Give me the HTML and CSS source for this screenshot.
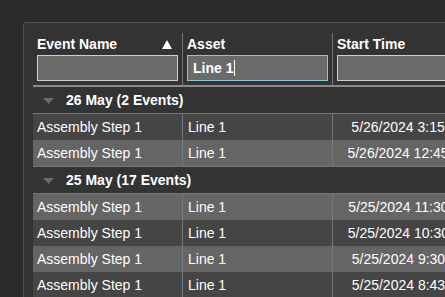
FILE: index.html
```html
<!DOCTYPE html>
<html lang="en">
<head>
    <meta charset="UTF-8">
    <title>Events Grid</title>
    <link rel="stylesheet" href="styles.css">
</head>
<body>
    <div class="panel">
        <div class="grid">
            <div class="head">
                <div class="hcell">
                    <div class="label">
                        <span>Event Name</span>
                        <svg class="sort" width="10" height="9" viewBox="0 0 10 9"><polygon points="5,0 10,9 0,9" fill="#fff"/></svg>
                    </div>
                    <div class="filter"></div>
                </div>
                <div class="hcell">
                    <div class="label"><span>Asset</span></div>
                    <div class="filter focus">Line 1<span class="caret"></span></div>
                </div>
                <div class="hcell">
                    <div class="label"><span>Start Time</span></div>
                    <div class="filter"></div>
                </div>
            </div>

            <div class="group">
                <svg class="expand" width="11" height="6" viewBox="0 0 11 6"><polygon points="0,0 11,0 5.5,6" fill="#6b6b6b"/></svg>
                <span>26 May (2 Events)</span>
            </div>
            <div class="row dark">
                <div class="cell">Assembly Step 1</div>
                <div class="cell asset">Line 1</div>
                <div class="cell time">5/26/2024 3:15 PM</div>
            </div>
            <div class="row light last">
                <div class="cell">Assembly Step 1</div>
                <div class="cell asset">Line 1</div>
                <div class="cell time">5/26/2024 12:45 PM</div>
            </div>

            <div class="group">
                <svg class="expand" width="11" height="6" viewBox="0 0 11 6"><polygon points="0,0 11,0 5.5,6" fill="#6b6b6b"/></svg>
                <span>25 May (17 Events)</span>
            </div>
            <div class="row light">
                <div class="cell">Assembly Step 1</div>
                <div class="cell asset">Line 1</div>
                <div class="cell time">5/25/2024 11:30 AM</div>
            </div>
            <div class="row dark">
                <div class="cell">Assembly Step 1</div>
                <div class="cell asset">Line 1</div>
                <div class="cell time">5/25/2024 10:30 AM</div>
            </div>
            <div class="row light">
                <div class="cell">Assembly Step 1</div>
                <div class="cell asset">Line 1</div>
                <div class="cell time">5/25/2024 9:30 AM</div>
            </div>
            <div class="row dark">
                <div class="cell">Assembly Step 1</div>
                <div class="cell asset">Line 1</div>
                <div class="cell time">5/25/2024 8:43 AM</div>
            </div>
        </div>
    </div>
</body>
</html>
```

FILE: styles.css
```css
body {
    margin: 0;
    height: 297px;
    overflow: hidden;
    background-color: #2b2b2b;
    font-family: "Liberation Sans", Arial, sans-serif;
    font-size: 14px;
    color: #fff;
}
.panel {
    margin: 22px 0 0 23px;
    width: 600px;
    height: 400px;
    padding: 10px 0 0 9px;
    background-color: #333;
    border-top: 1px solid #515151;
    border-left: 1px solid #515151;
    border-top-left-radius: 3px;
}
.grid {
    width: 456px;
}
.head, .row {
    display: grid;
    grid-template-columns: 150px 150px 156px;
}
.head {
    border-bottom: 2px solid #8a8a8a;
}
.hcell {
    padding: 3px 4px 4px 4px;
    border-right: 1px solid #777;
}
.label {
    display: flex;
    justify-content: space-between;
    align-items: center;
    height: 17px;
    line-height: 17px;
    margin-bottom: 2px;
    font-weight: bold;
}
.sort {
    margin-right: 6px;
    margin-top: -1px;
}
.filter {
    box-sizing: border-box;
    height: 26px;
    width: 141px;
    border: 1px solid #cfcfcf;
    background-color: #6a6a6a;
    padding-left: 5px;
    line-height: 24px;
    font-weight: bold;
}
.hcell:last-child .filter {
    width: 150px;
}
.filter.focus {
    border-color: #8cc6d9;
}
.caret {
    display: inline-block;
    width: 1px;
    height: 16px;
    background-color: #fff;
    vertical-align: -3px;
    margin-left: 1px;
}
.group {
    display: flex;
    align-items: center;
    height: 26px;
    border-bottom: 1px solid #777;
    padding-left: 10px;
    font-weight: bold;
}
.expand {
    margin-right: 12px;
    margin-top: 1px;
}
.row {
    height: 26px;
    line-height: 26px;
}
.row.last {
    border-bottom: 1px solid #777;
}
.dark {
    background-color: #454545;
}
.light {
    background-color: #656565;
}
.cell {
    padding-left: 4px;
    border-right: 1px solid #777;
    white-space: nowrap;
    overflow: hidden;
}
.cell.asset {
    padding-left: 5px;
}
.cell.time {
    padding-left: 0;
    text-align: center;
}
```
